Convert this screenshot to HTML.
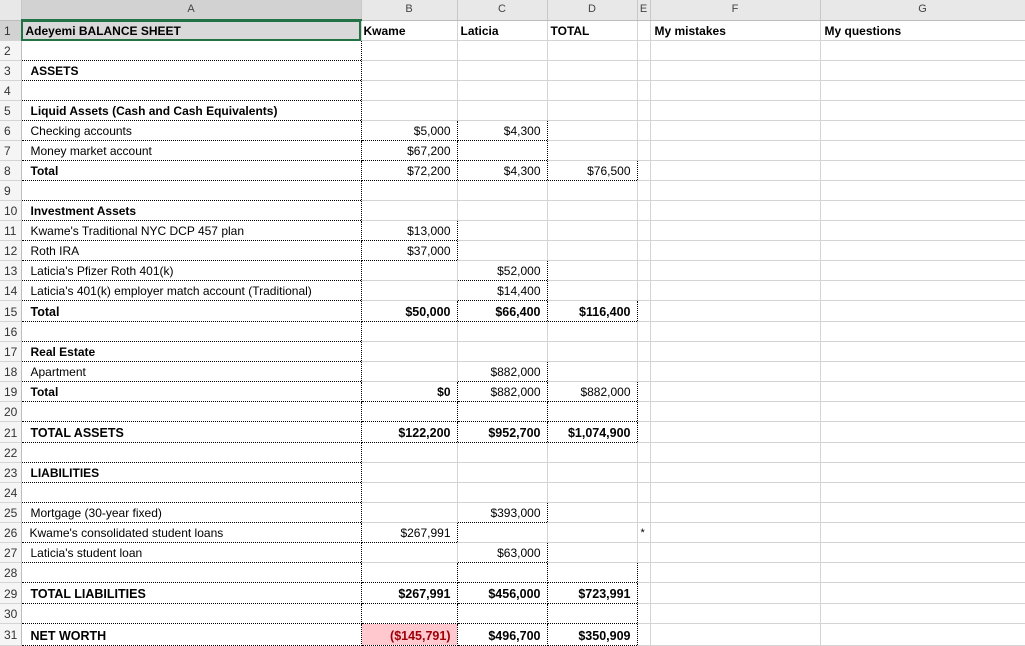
<!DOCTYPE html>
<html><head><meta charset="utf-8"><style>
body{margin:0;background:#fff;font-family:"Liberation Sans",sans-serif;font-size:12px;color:#000;overflow:hidden}
table{border-collapse:collapse;table-layout:fixed;width:1025px;position:absolute;left:0;top:0}
td{border-right:1px solid #d4d4d4;border-bottom:1px solid #d4d4d4;padding:2px 0 0 9px;white-space:nowrap;overflow:hidden;height:17px;line-height:17px}
tr.h td{background:#e8e8e8;color:#444;text-align:center;padding:0;font-size:11px;border-right:1px solid #c8c8c8;border-bottom:1px solid #bdbdbd;height:19px;line-height:19px}
td.n{background:#f5f5f5;color:#333;padding:2px 0 0 4px;font-size:12px;border-right:1px solid #bdbdbd}
td.a{border-right:1px dotted #000;border-bottom:1px dotted #000}
td.r{text-align:right;padding:2px 6px 0 0}
td.d{border-right:1px dotted #000;border-bottom:1px dotted #000}
tr.t td{height:18px;line-height:18px}
b{font-weight:bold}
.bb td.r{font-weight:bold;font-size:12.5px}
</style></head><body>
<table>
<colgroup><col style="width:21px"><col style="width:340px"><col style="width:96px"><col style="width:90px"><col style="width:90px"><col style="width:13px"><col style="width:170px"><col style="width:205px"></colgroup>
<tr class="h"><td style="background:#e8e8e8"></td><td style="background:#d2d2d2;border-bottom:2px solid #217346">A</td><td>B</td><td>C</td><td>D</td><td>E</td><td>F</td><td>G</td></tr>
<tr><td class="n" style="background:#d2d2d2">1</td><td style="background:#d9d9d9;outline:2px solid #217346;outline-offset:-2px;padding-left:4px;font-weight:bold">Adeyemi BALANCE SHEET</td><td style="padding-left:2px;font-weight:bold">Kwame</td><td style="padding-left:3px;font-weight:bold">Laticia</td><td style="padding-left:3px;font-weight:bold">TOTAL</td><td></td><td style="padding-left:4px;font-weight:bold">My mistakes</td><td style="padding-left:4px;font-weight:bold">My questions</td></tr>
<tr><td class="n">2</td><td class="a"></td><td></td><td></td><td></td><td></td><td></td><td></td></tr>
<tr><td class="n">3</td><td class="a"><b>ASSETS</b></td><td></td><td></td><td></td><td></td><td></td><td></td></tr>
<tr><td class="n">4</td><td class="a"></td><td></td><td></td><td></td><td></td><td></td><td></td></tr>
<tr><td class="n">5</td><td class="a"><b>Liquid Assets (Cash and Cash Equivalents)</b></td><td></td><td></td><td></td><td></td><td></td><td></td></tr>
<tr><td class="n">6</td><td class="a">Checking accounts</td><td class="r d">$5,000</td><td class="r d">$4,300</td><td></td><td></td><td></td><td></td></tr>
<tr><td class="n">7</td><td class="a">Money market account</td><td class="r d">$67,200</td><td class="r d"></td><td></td><td></td><td></td><td></td></tr>
<tr><td class="n">8</td><td class="a"><b>Total</b></td><td class="r d">$72,200</td><td class="r d">$4,300</td><td class="r d">$76,500</td><td></td><td></td><td></td></tr>
<tr><td class="n">9</td><td class="a"></td><td></td><td></td><td></td><td></td><td></td><td></td></tr>
<tr><td class="n">10</td><td class="a"><b>Investment Assets</b></td><td></td><td></td><td></td><td></td><td></td><td></td></tr>
<tr><td class="n">11</td><td class="a">Kwame's Traditional NYC DCP 457 plan</td><td class="r d">$13,000</td><td></td><td></td><td></td><td></td><td></td></tr>
<tr><td class="n">12</td><td class="a">Roth IRA</td><td class="r d">$37,000</td><td></td><td></td><td></td><td></td><td></td></tr>
<tr><td class="n">13</td><td class="a">Laticia's Pfizer Roth 401(k)</td><td></td><td class="r d">$52,000</td><td></td><td></td><td></td><td></td></tr>
<tr><td class="n">14</td><td class="a">Laticia's 401(k) employer match account (Traditional)</td><td></td><td class="r d">$14,400</td><td></td><td></td><td></td><td></td></tr>
<tr class="t bb"><td class="n">15</td><td class="a" style="font-size:12.5px"><b>Total</b></td><td class="r d">$50,000</td><td class="r d">$66,400</td><td class="r d">$116,400</td><td></td><td></td><td></td></tr>
<tr><td class="n">16</td><td class="a"></td><td></td><td></td><td></td><td></td><td></td><td></td></tr>
<tr><td class="n">17</td><td class="a"><b>Real Estate</b></td><td></td><td></td><td></td><td></td><td></td><td></td></tr>
<tr><td class="n">18</td><td class="a">Apartment</td><td></td><td class="r d">$882,000</td><td></td><td></td><td></td><td></td></tr>
<tr><td class="n">19</td><td class="a"><b>Total</b></td><td class="r d"><b>$0</b></td><td class="r d">$882,000</td><td class="r d">$882,000</td><td></td><td></td><td></td></tr>
<tr><td class="n">20</td><td class="a"></td><td class="d"></td><td class="d"></td><td class="d"></td><td></td><td></td><td></td></tr>
<tr class="t bb"><td class="n">21</td><td class="a" style="font-size:12.5px"><b>TOTAL ASSETS</b></td><td class="r d">$122,200</td><td class="r d">$952,700</td><td class="r d">$1,074,900</td><td></td><td></td><td></td></tr>
<tr><td class="n">22</td><td class="a"></td><td></td><td></td><td></td><td></td><td></td><td></td></tr>
<tr><td class="n">23</td><td class="a"><b>LIABILITIES</b></td><td></td><td></td><td></td><td></td><td></td><td></td></tr>
<tr><td class="n">24</td><td class="a"></td><td></td><td></td><td></td><td></td><td></td><td></td></tr>
<tr><td class="n">25</td><td class="a">Mortgage (30-year fixed)</td><td></td><td class="r d">$393,000</td><td></td><td></td><td></td><td></td></tr>
<tr><td class="n">26</td><td class="a" style="padding-left:8px">Kwame's consolidated student loans</td><td class="r d">$267,991</td><td></td><td></td><td style="padding-left:3px;font-size:11px">*</td><td></td><td></td></tr>
<tr><td class="n">27</td><td class="a">Laticia's student loan</td><td></td><td class="r d">$63,000</td><td></td><td></td><td></td><td></td></tr>
<tr><td class="n">28</td><td class="a"></td><td class="d"></td><td class="d"></td><td class="d"></td><td></td><td></td><td></td></tr>
<tr class="t bb"><td class="n">29</td><td class="a" style="font-size:12.5px"><b>TOTAL LIABILITIES</b></td><td class="r d">$267,991</td><td class="r d">$456,000</td><td class="r d">$723,991</td><td></td><td></td><td></td></tr>
<tr><td class="n">30</td><td class="a"></td><td class="d"></td><td class="d"></td><td class="d"></td><td></td><td></td><td></td></tr>
<tr class="t bb"><td class="n" style="height:19px;line-height:19px">31</td><td class="a" style="font-size:12.5px"><b>NET WORTH</b></td><td class="r d" style="background:#ffc7ce;color:#9c0006">($145,791)</td><td class="r d">$496,700</td><td class="r d">$350,909</td><td></td><td></td><td></td></tr>
</table>
</body></html>
